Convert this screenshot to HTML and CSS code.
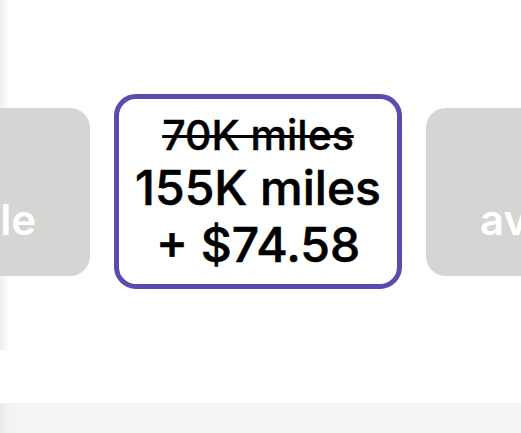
FILE: index.html
```html
<!DOCTYPE html>
<html>
<head>
<meta charset="utf-8">
<link rel="stylesheet" href="styles.css">
</head>
<body>
<div class="stage">
  <div class="track">
    <div class="card card-muted card-left"><span>Not<br>available</span></div>
    <div class="card card-selected">
      <div class="old">70K miles</div>
      <div class="line">155K miles</div>
      <div class="line">+ $74.58</div>
    </div>
    <div class="card card-muted"><span>Not<br>available</span></div>
  </div>
</div>
<div class="footer"></div>
</body>
</html>
```
FILE: styles.css
```css
html, body {
  margin: 0;
  padding: 0;
  background: #ffffff;
  width: 521px;
  height: 433px;
  overflow: hidden;
  font-family: Inter, "Liberation Sans", Arial, sans-serif;
}
.stage {
  height: 403px;
  padding-top: 94px;
  box-sizing: border-box;
  background-image: linear-gradient(to right, #efefef 0px, #f7f7f7 5px, #ffffff 9px);
  background-size: 100% 350px;
  background-repeat: no-repeat;
  overflow: hidden;
}
.track {
  display: flex;
  align-items: center;
  gap: 24px;
  width: max-content;
}
.card {
  flex: 0 0 auto;
  width: 288px;
  box-sizing: border-box;
  border-radius: 22px;
  display: flex;
  flex-direction: column;
  align-items: center;
  justify-content: center;
  text-align: center;
  color: #000;
}
.card-left {
  margin-left: -198px;
}
.card-muted {
  height: 168px;
  background: #d5d5d3;
  color: #ffffff;
  border-radius: 20px;
  font-size: 42px;
  font-weight: 600;
  line-height: 56px;
}
.card-selected {
  height: 195px;
  border: 5px solid #5b4bb0;
  background: #ffffff;
}
.old {
  font-size: 41px;
  font-weight: 500;
  line-height: 48px;
  text-decoration: line-through;
  text-decoration-thickness: 3px;
  -webkit-text-stroke: 0.4px #000;
}
.line {
  font-size: 48px;
  font-weight: 500;
  line-height: 57px;
  -webkit-text-stroke: 0.6px #000;
}
.footer {
  height: 30px;
  background: linear-gradient(to right, #ebebeb 0px, #f4f4f4 10px, #f5f5f5 100%);
}
```
